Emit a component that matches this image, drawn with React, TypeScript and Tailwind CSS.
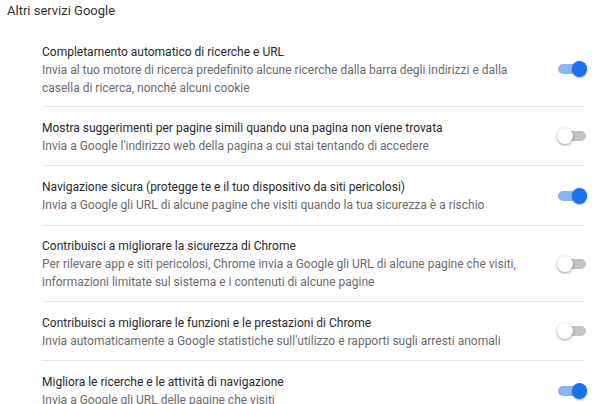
import React from "react";

type Row = { title: string; desc: string[]; on: boolean; h: string };

const rows: Row[] = [
  {
    title: "Completamento automatico di ricerche e URL",
    desc: [
      "Invia al tuo motore di ricerca predefinito alcune ricerche dalla barra degli indirizzi e dalla",
      "casella di ricerca, nonché alcuni cookie",
    ],
    on: true,
    h: "h-[75px]",
  },
  {
    title: "Mostra suggerimenti per pagine simili quando una pagina non viene trovata",
    desc: ["Invia a Google l'indirizzo web della pagina a cui stai tentando di accedere"],
    on: false,
    h: "h-[59px]",
  },
  {
    title: "Navigazione sicura (protegge te e il tuo dispositivo da siti pericolosi)",
    desc: ["Invia a Google gli URL di alcune pagine che visiti quando la tua sicurezza è a rischio"],
    on: true,
    h: "h-[60px]",
  },
  {
    title: "Contribuisci a migliorare la sicurezza di Chrome",
    desc: [
      "Per rilevare app e siti pericolosi, Chrome invia a Google gli URL di alcune pagine che visiti,",
      "informazioni limitate sul sistema e i contenuti di alcune pagine",
    ],
    on: false,
    h: "h-[76px]",
  },
  {
    title: "Contribuisci a migliorare le funzioni e le prestazioni di Chrome",
    desc: ["Invia automaticamente a Google statistiche sull'utilizzo e rapporti sugli arresti anomali"],
    on: false,
    h: "h-[59px]",
  },
  {
    title: "Migliora le ricerche e le attività di navigazione",
    desc: ["Invia a Google gli URL delle pagine che visiti"],
    on: true,
    h: "h-[59px]",
  },
];

function Toggle({ on }: { on: boolean }) {
  if (on) {
    return (
      <div className="relative w-[30px] h-[16px] flex items-center">
        <div className="w-[28px] h-[10px] rounded-full bg-[#8ab4f8] ml-[1px]" />
        <div className="absolute right-0 top-0 w-[15px] h-[16px] rounded-full bg-[#1a73e8] shadow-[0_1px_2px_rgba(0,0,0,0.3)]" />
      </div>
    );
  }
  return (
    <div className="relative w-[30px] h-[16px] flex items-center">
      <div className="w-[28px] h-[10px] rounded-full bg-[#c4c4c4] ml-[1px]" />
      <div className="absolute left-0 top-0 w-[16px] h-[16px] rounded-full bg-white shadow-[0_1px_3px_rgba(0,0,0,0.4)]" />
    </div>
  );
}

export default function App() {
  return (
    <div
      className="w-[600px] h-[404px] overflow-hidden bg-white text-[#333]"
      style={{ fontFamily: "Roboto, 'Liberation Sans', sans-serif" }}
    >
      <div className="pl-[7px] h-[32px] text-[13px] leading-[22px] text-[#333]">
        Altri servizi Google
      </div>
      <div className="pl-[42px] pr-[15px]">
        {rows.map((r, i) => (
          <div
            key={i}
            className={`${r.h} flex items-center ${i < rows.length - 1 ? "border-b border-[#e8e8e8]" : ""}`}
          >
            <div className="flex-1 text-[12px] leading-[18px] pt-[1px]">
              <div className="text-[#2a2a2a]">{r.title}</div>
              {r.desc.map((d, j) => (
                <div key={j} className="text-[#6b6b6b]">
                  {d}
                </div>
              ))}
            </div>
            <div className="mr-[-2px]">
              <Toggle on={r.on} />
            </div>
          </div>
        ))}
      </div>
    </div>
  );
}
